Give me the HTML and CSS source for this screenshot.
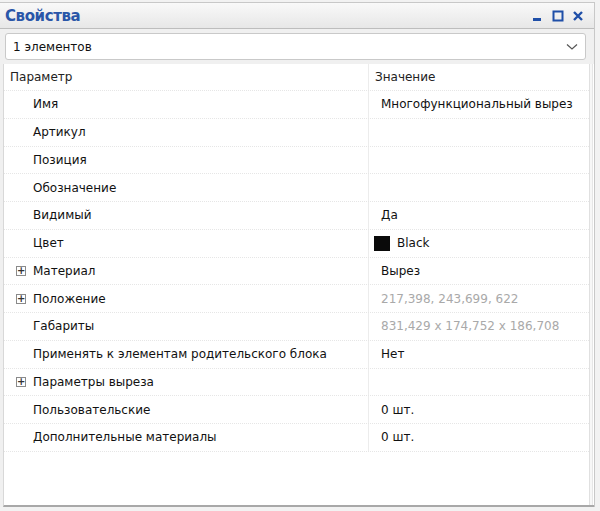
FILE: index.html
```html
<!DOCTYPE html>
<html lang="ru">
<head>
<meta charset="utf-8">
<link rel="stylesheet" href="styles.css">
</head>
<body>
<div class="panel">
  <div class="titlebar">
    <span class="title">Свойства</span>
    <div class="winbtns">
      <svg width="12" height="12" viewBox="0 0 12 12"><rect x="1" y="8" width="8" height="3" fill="#1f4fa8"/></svg>
      <svg width="12" height="12" viewBox="0 0 12 12"><rect x="1.5" y="1.5" width="9" height="9" fill="none" stroke="#1f4fa8" stroke-width="2"/></svg>
      <svg width="12" height="12" viewBox="0 0 12 12"><path d="M2 2 L10 10 M10 2 L2 10" stroke="#1f4fa8" stroke-width="2.4"/></svg>
    </div>
  </div>
  <div class="body">
    <div class="combo">
      <span>1 элементов</span>
      <svg width="12" height="8" viewBox="0 0 12 8"><path d="M1 1.5 L6 6 L11 1.5" fill="none" stroke="#555" stroke-width="1.2"/></svg>
    </div>
    <div class="grid">
      <div class="table">
        <div class="row head"><div class="c1">Параметр</div><div class="c2">Значение</div></div>
        <div class="row"><div class="c1 ind">Имя</div><div class="c2 val">Многофункциональный вырез</div></div>
        <div class="row"><div class="c1 ind">Артикул</div><div class="c2 val"></div></div>
        <div class="row"><div class="c1 ind">Позиция</div><div class="c2 val"></div></div>
        <div class="row"><div class="c1 ind">Обозначение</div><div class="c2 val"></div></div>
        <div class="row"><div class="c1 ind">Видимый</div><div class="c2 val">Да</div></div>
        <div class="row"><div class="c1 ind">Цвет</div><div class="c2 val"><span class="swatch"></span>Black</div></div>
        <div class="row"><div class="c1"><span class="plus">+</span>Материал</div><div class="c2 val">Вырез</div></div>
        <div class="row"><div class="c1"><span class="plus">+</span>Положение</div><div class="c2 val gray">217,398, 243,699, 622</div></div>
        <div class="row"><div class="c1 ind">Габариты</div><div class="c2 val gray">831,429 x 174,752 x 186,708</div></div>
        <div class="row"><div class="c1 ind">Применять к элементам родительского блока</div><div class="c2 val">Нет</div></div>
        <div class="row"><div class="c1"><span class="plus">+</span>Параметры выреза</div><div class="c2 val"></div></div>
        <div class="row"><div class="c1 ind">Пользовательские</div><div class="c2 val">0 шт.</div></div>
        <div class="row"><div class="c1 ind">Дополнительные материалы</div><div class="c2 val">0 шт.</div></div>
      </div>
      <div class="scroll"></div>
    </div>
  </div>
</div>
</body>
</html>
```
FILE: styles.css
```css
* { box-sizing: border-box; }
html, body { margin: 0; padding: 0; }
body {
  width: 600px; height: 511px;
  background: #f2f2f2;
  font-family: Tahoma, "DejaVu Sans", Verdana, sans-serif;
  font-size: 12px;
  color: #111;
  overflow: hidden;
}
.panel {
  margin-top: 2px;
  width: 595px;
  height: 505px;
  border-top: 1px solid #c8c8c8;
  border-right: 1px solid #c8c8c8;
  display: flex;
  flex-direction: column;
}
.titlebar {
  height: 26px;
  background: linear-gradient(#f9f9f9, #e7e7e7);
  border-bottom: 1px solid #bdbdbd;
  display: flex;
  align-items: center;
  justify-content: space-between;
  padding: 0 10px 0 5px;
}
.title {
  color: #2a56a8;
  font-weight: bold;
  font-size: 15px;
  font-family: "DejaVu Sans", sans-serif;
  letter-spacing: -0.4px;
}
.winbtns { display: flex; gap: 8px; align-items: center; }
.body {
  flex: 1;
  display: flex;
  flex-direction: column;
  padding: 4px 0 0 3px;
  background: #f0f0f0;
}
.combo {
  margin-left: 2px;
  width: 581px;
  height: 27px;
  background: #fff;
  border: 1px solid #c9c9c9;
  border-radius: 3px;
  display: flex;
  align-items: center;
  justify-content: space-between;
  padding: 0 7px 0 7px;
  font-size: 12px;
}
.grid {
  margin-top: 4px;
  flex: 1;
  background: #fff;
  border-bottom: 2px solid #a8a8a8;
  border-left: 1px solid #d8d8d8;
  display: flex;
}
.table { flex: 1; }
.scroll {
  width: 4px;
  border-left: 1px solid #e0e0e0;
  border-right: 1px solid #e6e6e6;
  background: #f7f7f7;
  margin-right: 1px;
}
.row {
  display: flex;
  height: 27.75px;
  align-items: center;
  border-bottom: 1px dotted #e6e6e6;
}
.row.head { height: 27px; }
.c1 {
  width: 365px;
  padding-left: 6px;
  display: flex;
  align-items: center;
  height: 100%;
  border-right: 1px solid #ececec;
  white-space: nowrap;
}
.c1.ind { padding-left: 29px; }
.head .c1, .head .c2 { color: #222; }
.c2 {
  flex: 1;
  padding-left: 6px;
  display: flex;
  align-items: center;
  height: 100%;
  white-space: nowrap;
}
.c2.val { padding-left: 12px; }
.gray { color: #a9a9a9; }
.swatch {
  width: 16px; height: 15px;
  background: #0a0a0a;
  margin-right: 7px;
  margin-left: -7px;
}
.plus {
  width: 10px; height: 10px;
  border: 1px solid #8a8a8a;
  font-size: 10px;
  line-height: 8px;
  text-align: center;
  font-weight: bold;
  color: #333;
  margin: 0 7px 0 6px;
  display: inline-block;
}
```
